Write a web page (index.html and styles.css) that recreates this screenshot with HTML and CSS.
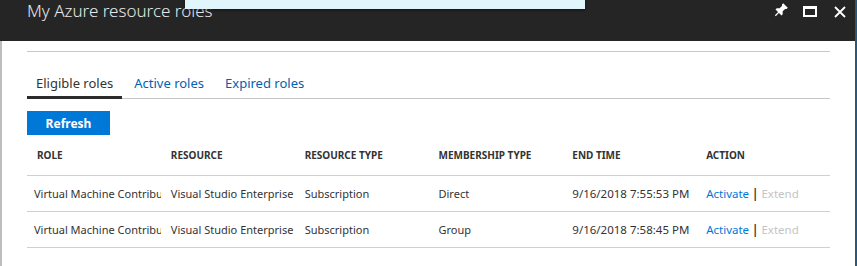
FILE: index.html
```html
<!DOCTYPE html>
<html lang="en">
<head>
    <meta charset="UTF-8">
    <title>My Azure resource roles</title>
    <link rel="stylesheet" href="styles.css">
</head>
<body>
    <div class="blade">
        <div class="blade-main">
            <div class="blade-header">
                <h1 class="blade-title">My Azure resource roles</h1>
                <div class="blade-controls">
                    <svg class="ctl-pin" width="15" height="15" viewBox="0 0 16 16">
                        <g transform="rotate(45 8 8)" fill="#fff">
                            <path d="M4.5 0.5h7v1.8l-1.2 1v3.7l2.2 2.2v1.8h-9V9.2l2.2-2.2V3.3l-1.2-1z"/>
                            <path d="M7.3 10.5h1.4v5.3h-1.4z"/>
                        </g>
                    </svg>
                    <svg class="ctl-max" width="14" height="11" viewBox="0 0 14 11">
                        <path fill="#fff" fill-rule="evenodd" d="M0 0h14v11H0z M2 3v6h10V3z"/>
                    </svg>
                    <svg class="ctl-close" width="12" height="12" viewBox="0 0 12 12">
                        <path d="M1 1l10 10M11 1L1 11" stroke="#fff" stroke-width="1.8"/>
                    </svg>
                </div>
            </div>

            <div class="blade-content">
                <div class="divider"></div>

                <div class="tabs">
                    <a href="#" class="tab active">Eligible roles</a>
                    <a href="#" class="tab">Active roles</a>
                    <a href="#" class="tab">Expired roles</a>
                </div>

                <button class="refresh-btn">Refresh</button>

                <table class="roles-table">
                    <thead>
                        <tr>
                            <th>Role</th>
                            <th>Resource</th>
                            <th>Resource type</th>
                            <th>Membership type</th>
                            <th>End time</th>
                            <th>Action</th>
                        </tr>
                    </thead>
                    <tbody>
                        <tr>
                            <td>Virtual Machine Contributor</td>
                            <td>Visual Studio Enterprise</td>
                            <td>Subscription</td>
                            <td>Direct</td>
                            <td class="cell-time">9/16/2018 7:55:53 PM</td>
                            <td class="cell-action"><a href="#" class="act-link">Activate</a> <span class="sep">|</span> <span class="act-disabled">Extend</span></td>
                        </tr>
                        <tr>
                            <td>Virtual Machine Contributor</td>
                            <td>Visual Studio Enterprise</td>
                            <td>Subscription</td>
                            <td>Group</td>
                            <td class="cell-time">9/16/2018 7:58:45 PM</td>
                            <td class="cell-action"><a href="#" class="act-link">Activate</a> <span class="sep">|</span> <span class="act-disabled">Extend</span></td>
                        </tr>
                    </tbody>
                </table>
            </div>
        </div>
        <div class="blade-edge"></div>
    </div>

    <div class="flyout"></div>
</body>
</html>
```

FILE: styles.css
```css
body {
    margin: 0;
    font-family: 'Noto Sans', 'Open Sans', sans-serif;
    background-color: #fff;
    color: #333;
    width: 857px;
    height: 266px;
    overflow: hidden;
}

.blade {
    display: flex;
    height: 266px;
}

.blade-main {
    flex: 1;
    display: flex;
    flex-direction: column;
    border-left: 2px solid #bdbdbd;
}

.blade-edge {
    width: 2px;
    background-color: #2b5878;
}

.blade-header {
    height: 41px;
    background-color: #252525;
    display: flex;
    justify-content: space-between;
    align-items: flex-start;
    margin-left: -2px;
    padding-left: 27px;
    padding-right: 9px;
    overflow: hidden;
}

.blade-title {
    margin: 0;
    margin-top: -1px;
    font-size: 17px;
    font-weight: 300;
    line-height: 24px;
    color: #e8e8e8;
}

.blade-controls {
    display: flex;
    align-items: flex-start;
    gap: 15px;
    padding-top: 3px;
}

.ctl-max {
    margin-top: 3px;
}

.ctl-close {
    margin-top: 3px;
    margin-left: 2px;
}

.blade-content {
    flex: 1;
    padding: 10px 25px 0 25px;
}

.divider {
    height: 1px;
    background-color: #c8c8c8;
}

.tabs {
    display: flex;
    gap: 3px;
    margin-top: 18px;
    border-bottom: 1px solid #c6c6c6;
}

.tab {
    display: block;
    padding: 5px 9px 5px 9px;
    margin-bottom: -1px;
    font-size: 13px;
    line-height: 16px;
    color: #0063b1;
    text-decoration: none;
    border-bottom: 3px solid transparent;
}

.tab.active {
    color: #333;
    border-bottom-color: #2b2b2b;
}

.refresh-btn {
    display: block;
    margin-top: 12px;
    width: 83px;
    height: 24px;
    padding: 0;
    border: none;
    background-color: #0078d7;
    color: #fff;
    font-family: inherit;
    font-size: 12px;
    font-weight: 700;
    cursor: pointer;
}

.roles-table {
    width: 803px;
    table-layout: fixed;
    border-collapse: collapse;
    font-size: 11px;
}

.roles-table th {
    height: 40px;
    padding: 0 0 0 10px;
    text-align: left;
    font-size: 10px;
    font-weight: 700;
    text-transform: uppercase;
    color: #333;
    border-bottom: 1px solid #d0d0d0;
}

.roles-table td {
    height: 35px;
    padding: 0 0 0 10px;
    white-space: nowrap;
    overflow: hidden;
    color: #333;
    border-bottom: 1px solid #d0d0d0;
}

.roles-table td:first-child {
    padding-left: 7px;
}

.roles-table .cell-time {
    font-size: 11.5px;
}

.roles-table .cell-action {
    font-size: 11.5px;
}

.act-link {
    color: #0078d7;
    text-decoration: none;
}

.sep {
    color: #333;
    font-weight: 700;
}

.act-disabled {
    color: #c4c4c4;
}

.flyout {
    position: absolute;
    top: 0;
    left: 185px;
    width: 400px;
    height: 9px;
    background-color: #e1f5fd;
    box-shadow: 0 1px 3px rgba(0, 0, 0, 0.5);
}
```
